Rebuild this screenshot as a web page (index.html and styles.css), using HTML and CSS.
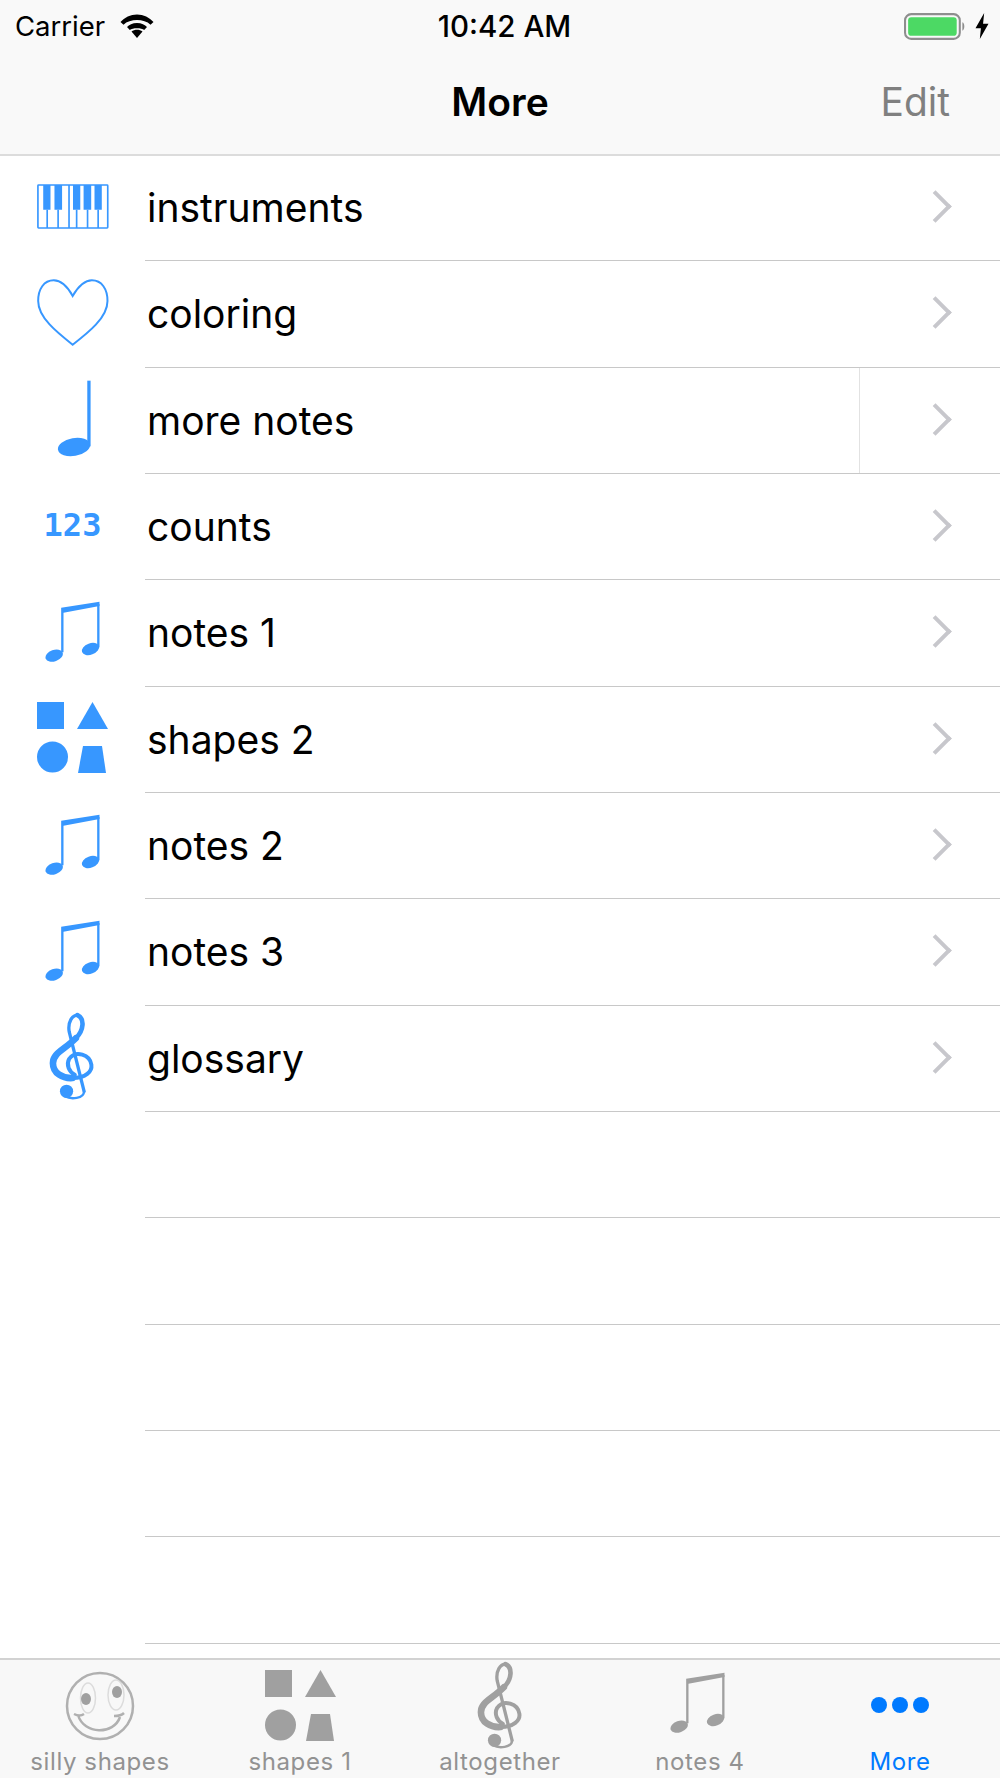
FILE: index.html
```html
<!DOCTYPE html>
<html>
  <head>
    <meta charset="utf-8">
    <title>More</title>
    <link rel="stylesheet" href="styles.css">
  </head>
  <body>
    <svg class="defs" width="0" height="0">
      <symbol id="notes" viewBox="130 360 170 195">
        <path d="M181 386 L296 368 V381 L188 401 V520 H181 Z"/>
        <path d="M289 375 H296 V505 H289 Z"/>
        <ellipse cx="160" cy="530" rx="27" ry="17" transform="rotate(-20 160 530)"/>
        <ellipse cx="269" cy="510" rx="27" ry="17" transform="rotate(-20 269 510)"/>
      </symbol>
      <symbol id="shapes" viewBox="0 0 71 71">
        <rect x="0" y="0" width="27" height="27"/>
        <path d="M40 27 L55.500 0 L71 27 Z"/>
        <circle cx="15.500" cy="55" r="15.500"/>
        <path d="M46 44 H65 L69 71 H41 Z"/>
      </symbol>
      <symbol id="clef" viewBox="135 625 160 280">
        <g fill="none" stroke="currentColor" stroke-linecap="round">
          <path stroke-width="10" d="M250 870 L205 690 C200 660 215 640 230 640"/>
          <path stroke-width="14" d="M230 640 C252 650 250 685 225 710"/>
          <path stroke-width="20" d="M225 710 C190 745 156 755 156 785 C156 815 185 832 215 830"/>
          <path stroke-width="12" d="M215 830 C255 830 275 810 272 790 C268 760 225 745 205 772 C195 790 205 812 222 820"/>
          <path stroke-width="7" d="M250 870 C250 893 210 895 192 885"/>
        </g>
        <circle cx="197" cy="870" r="20"/>
      </symbol>
    </svg>

    <div class="app">
      <div class="topbar">
        <div class="status">
          <div class="status-left">
            <span>Carrier</span>
            <svg class="wifi" viewBox="0 0 34 24">
              <path d="M17 24 L11.500 17.500 C14.500 15 19.500 15 22.500 17.500 Z"/>
              <path d="M17 9 C12.500 9 9 11 7 13 L9.800 16 C12.500 13.500 21.500 13.500 24.200 16 L27 13 C25 11 21.500 9 17 9 Z"/>
              <path d="M17 0.500 C10.500 0.500 4.500 3.500 0.500 8 L3.500 10.700 C10 4.500 24 4.500 30.500 10.700 L33.500 8 C29.500 3.500 23.500 0.500 17 0.500 Z"/>
            </svg>
          </div>
          <div class="status-time">10:42 AM</div>
          <div class="status-right">
            <svg class="battery" viewBox="0 0 60 26">
              <rect x="1" y="1" width="53" height="24" rx="6" fill="none" stroke="#8e8e8e" stroke-width="2"/>
              <rect x="4" y="4" width="47" height="18" rx="3" fill="#4cd964"/>
              <path d="M56.500 9 C59 10 59 16 56.500 17 Z" fill="#8e8e8e"/>
            </svg>
            <svg class="bolt" viewBox="0 0 14 24">
              <path d="M9 0 L1 14 H6 L5 24 L13 10 H8 Z"/>
            </svg>
          </div>
        </div>
        <div class="nav">
          <div class="nav-title">More</div>
          <div class="nav-edit">Edit</div>
        </div>
      </div>

      <div class="list">
        <div class="row">
          <div class="row-icon">
            <svg class="piano" viewBox="110 100 216 136">
              <rect x="112" y="103" width="211" height="130" rx="2" fill="none" stroke="currentColor" stroke-width="5"/>
              <path d="M140 178 V233 M173 178 V233 M206 103 V233 M229 178 V233 M262 178 V233 M294 178 V233" fill="none" stroke="currentColor" stroke-width="5"/>
              <path d="M128 103 H150 V178 H128 Z M162 103 H185 V178 H162 Z M218 103 H240 V178 H218 Z M250 103 H273 V178 H250 Z M283 103 H305 V178 H283 Z"/>
            </svg>
          </div>
          <div class="row-body">
            <span class="row-label">instruments</span>
            <div class="row-more"><span class="chevron"></span></div>
          </div>
        </div>
        <div class="row">
          <div class="row-icon">
            <svg class="heart" viewBox="110 384 216 202">
              <path d="M217 435 C200 405 180 388 160 388 C130 388 113 415 113 450 C113 500 170 545 217 582 C265 545 322 500 322 450 C322 415 305 388 275 388 C255 388 235 405 217 435 Z" fill="none" stroke="currentColor" stroke-width="6"/>
            </svg>
          </div>
          <div class="row-body">
            <span class="row-label">coloring</span>
            <div class="row-more"><span class="chevron"></span></div>
          </div>
        </div>
        <div class="row">
          <div class="row-icon">
            <svg class="note" viewBox="170 690 105 235">
              <path d="M261 692 H271 V890 H261 Z"/>
              <ellipse cx="221" cy="892" rx="49" ry="27" transform="rotate(-10 221 892)"/>
            </svg>
          </div>
          <div class="row-body">
            <span class="row-label">more notes</span>
            <div class="row-more row-more-split"><span class="chevron"></span></div>
          </div>
        </div>
        <div class="row">
          <div class="row-icon"><span class="counts">123</span></div>
          <div class="row-body">
            <span class="row-label">counts</span>
            <div class="row-more"><span class="chevron"></span></div>
          </div>
        </div>
        <div class="row">
          <div class="row-icon"><svg class="notes"><use href="#notes"/></svg></div>
          <div class="row-body">
            <span class="row-label">notes 1</span>
            <div class="row-more"><span class="chevron"></span></div>
          </div>
        </div>
        <div class="row">
          <div class="row-icon"><svg class="shapes"><use href="#shapes"/></svg></div>
          <div class="row-body">
            <span class="row-label">shapes 2</span>
            <div class="row-more"><span class="chevron"></span></div>
          </div>
        </div>
        <div class="row">
          <div class="row-icon"><svg class="notes"><use href="#notes"/></svg></div>
          <div class="row-body">
            <span class="row-label">notes 2</span>
            <div class="row-more"><span class="chevron"></span></div>
          </div>
        </div>
        <div class="row">
          <div class="row-icon"><svg class="notes"><use href="#notes"/></svg></div>
          <div class="row-body">
            <span class="row-label">notes 3</span>
            <div class="row-more"><span class="chevron"></span></div>
          </div>
        </div>
        <div class="row">
          <div class="row-icon"><svg class="clef"><use href="#clef"/></svg></div>
          <div class="row-body">
            <span class="row-label">glossary</span>
            <div class="row-more"><span class="chevron"></span></div>
          </div>
        </div>
        <div class="row"><div class="row-icon"></div><div class="row-body"></div></div>
        <div class="row"><div class="row-icon"></div><div class="row-body"></div></div>
        <div class="row"><div class="row-icon"></div><div class="row-body"></div></div>
        <div class="row"><div class="row-icon"></div><div class="row-body"></div></div>
        <div class="row"><div class="row-icon"></div><div class="row-body"></div></div>
      </div>

      <div class="tabbar">
        <div class="tab">
          <svg class="tab-icon smiley" viewBox="0 0 72 72">
            <circle cx="36" cy="36" r="33" fill="none" stroke="#b0b0b0" stroke-width="2.500"/>
            <ellipse cx="24" cy="28" rx="7.500" ry="15" fill="none" stroke="#dcdcdc" stroke-width="1.500"/>
            <ellipse cx="52" cy="25" rx="8" ry="15" fill="none" stroke="#dcdcdc" stroke-width="1.500"/>
            <ellipse cx="22" cy="29" rx="5" ry="6"/>
            <ellipse cx="53" cy="22" rx="5" ry="6"/>
            <path d="M14 45 C20 65 50 65 56 47 M10 44 C14 46 17 46 20 44 M50 46 C54 46 58 45 60 43" fill="none" stroke="#b0b0b0" stroke-width="2.500"/>
          </svg>
          <span class="tab-label">silly shapes</span>
        </div>
        <div class="tab">
          <svg class="tab-icon shapes"><use href="#shapes"/></svg>
          <span class="tab-label">shapes 1</span>
        </div>
        <div class="tab">
          <svg class="tab-icon clef tab-clef"><use href="#clef"/></svg>
          <span class="tab-label">altogether</span>
        </div>
        <div class="tab">
          <svg class="tab-icon notes tab-notes"><use href="#notes"/></svg>
          <span class="tab-label">notes 4</span>
        </div>
        <div class="tab tab-active">
          <div class="tab-icon dots"><span></span><span></span><span></span></div>
          <span class="tab-label">More</span>
        </div>
      </div>
    </div>
  </body>
</html>
```

FILE: styles.css
```css
* {
  box-sizing: border-box;
}
body,
html {
  margin: 0;
  width: 1000px;
  height: 1778px;
  overflow: hidden;
  background: #fff;
  font-family: Inter, 'Noto Sans', sans-serif;
  color: #000;
}
.defs {
  position: absolute;
}
.app {
  display: flex;
  flex-direction: column;
  height: 1778px;
}

/* top */
.topbar {
  height: 156px;
  flex: none;
  background: #f9f9f9;
  border-bottom: 2px solid #dcdcdc;
}
.status {
  height: 52px;
  display: grid;
  grid-template-columns: 1fr auto 1fr;
  align-items: center;
  padding: 0 6px 0 15px;
  font-size: 27.5px;
}
.status-left {
  display: flex;
  align-items: center;
  gap: 15px;
}
.status-time {
  font-weight: 500;
  font-size: 29.5px;
}
.status-right {
  display: flex;
  justify-content: flex-end;
  align-items: center;
  gap: 8px;
  margin-right: 4px;
}
.wifi {
  width: 34px;
  height: 24px;
}
.battery {
  width: 62px;
  height: 27px;
}
.bolt {
  width: 16px;
  height: 26px;
}
.nav {
  height: 102px;
  padding: 0 50px 4px;
  display: grid;
  grid-template-columns: 1fr auto 1fr;
  align-items: center;
  font-size: 39px;
}
.nav-title {
  grid-column: 2;
  font-weight: 600;
}
.nav-edit {
  justify-self: end;
  color: #808080;
}

/* list */
.list {
  flex: 1;
  overflow: hidden;
  margin-top: -1px;
}
.row {
  display: flex;
  height: 106.33px;
}
.row-icon {
  width: 145px;
  flex: none;
  display: flex;
  align-items: center;
  justify-content: center;
  padding-bottom: 4px;
  color: #3797ff;
  fill: #3797ff;
}
.row-body {
  flex: 1;
  display: flex;
  align-items: center;
  justify-content: space-between;
  border-bottom: 1px solid #c8c8c8;
  padding-left: 2px;
}
.row-label {
  font-size: 39px;
}
.row-more {
  align-self: stretch;
  width: 141px;
  display: flex;
  align-items: center;
  justify-content: flex-end;
  padding: 0 53px 2px 0;
}
.row-more-split {
  border-left: 1px solid #e2e2e2;
}
.chevron {
  width: 23px;
  height: 23px;
  border-top: 4px solid #c7c7cc;
  border-right: 4px solid #c7c7cc;
  transform: rotate(45deg);
}
.piano {
  width: 72px;
  height: 45px;
}
.heart {
  width: 72px;
  height: 67px;
}
.note {
  width: 35px;
  height: 78px;
  margin-left: 4px;
}
.counts {
  font-family: 'DejaVu Sans Mono', monospace;
  font-weight: 700;
  font-size: 32px;
}
.notes {
  width: 57px;
  height: 65px;
}
.shapes {
  width: 71px;
  height: 71px;
}
.clef {
  width: 53px;
  height: 93px;
}

/* tabs */
.tabbar {
  height: 120px;
  flex: none;
  display: flex;
  background: #f8f8f8;
  border-top: 2px solid #d2d2d2;
}
.tab {
  width: 200px;
  height: 118px;
  display: flex;
  flex-direction: column;
  align-items: center;
  color: #a0a0a0;
  fill: #a0a0a0;
}
.tab-label {
  margin-top: auto;
  margin-bottom: 2px;
  font-size: 24px;
  letter-spacing: 0.6px;
  color: #929292;
}
.tab-icon {
  flex: none;
  margin-top: 10px;
}
.smiley {
  width: 72px;
  height: 72px;
}
.tab-clef {
  margin: -1px 0 -12px;
}
.tab-notes {
  margin-right: 5px;
}
.tab-active .tab-label {
  color: #007aff;
}
.dots {
  display: flex;
  gap: 5px;
  margin-top: 37px;
}
.dots span {
  width: 16px;
  height: 16px;
  border-radius: 50%;
  background: #007aff;
}
```
